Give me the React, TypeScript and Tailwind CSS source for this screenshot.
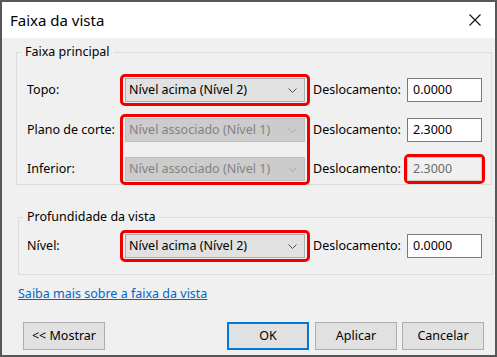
import React from "react"

const font = { fontFamily: '"Noto Sans", "Segoe UI", sans-serif' }

function Chevron({ disabled }: { disabled?: boolean }) {
  return (
    <svg width="9" height="5" viewBox="0 0 9 5" className="shrink-0">
      <path d="M0.5 0.5 L4.5 4.5 L8.5 0.5" fill="none" stroke={disabled ? "#a6a6a6" : "#505050"} strokeWidth="1" />
    </svg>
  )
}

function Combo({ value, disabled }: { value: string; disabled?: boolean }) {
  return (
    <div
      className={`flex h-[24px] w-[180px] items-center justify-between border pl-[3px] pr-[7px] text-[12.5px] ${
        disabled ? "border-[#bfbfbf] bg-[#cccccc] text-[#838383]" : "border-[#adadad] bg-[#e1e1e1] text-black"
      }`}
    >
      <span className="leading-none">{value}</span>
      <Chevron disabled={disabled} />
    </div>
  )
}

function Field({ value, disabled }: { value: string; disabled?: boolean }) {
  return (
    <div
      className={`flex h-[24px] w-[75px] items-center border pl-[5px] text-[12.5px] ${
        disabled ? "border-[#cccccc] bg-[#f0f0f0] text-[#6d6d6d]" : "border-[#7a7a7a] bg-white text-black"
      }`}
    >
      {value}
    </div>
  )
}

function Label({ text, className = "" }: { text: string; className?: string }) {
  return <div className={`flex h-[24px] items-center text-[12.5px] text-black ${className}`}>{text}</div>
}

function Button({ text, primary }: { text: string; primary?: boolean }) {
  return (
    <div
      className={`flex h-[28px] w-[82px] items-center justify-center bg-[#e1e1e1] text-[12.5px] text-black ${
        primary ? "border-2 border-[#0078d7]" : "border border-[#adadad]"
      }`}
    >
      {text}
    </div>
  )
}

export default function App() {
  return (
    <div style={font} className="flex h-[357px] w-[497px] flex-col border-2 border-[#575757] bg-[#f0f0f0]">
      {/* title bar */}
      <div className="flex h-[36px] shrink-0 items-center justify-between bg-white pl-[8px] pr-[14px]">
        <span className="text-[15px] text-black">Faixa da vista</span>
        <svg width="12" height="12" viewBox="0 0 12 12">
          <path d="M0.5 0.5 L11.5 11.5 M11.5 0.5 L0.5 11.5" stroke="#111" strokeWidth="1.1" />
        </svg>
      </div>

      <div className="flex flex-1 flex-col pl-[14px] pr-[3px] pt-[14px]">
        {/* Faixa principal */}
        <div className="relative flex border border-[#dcdcdc] pl-[10px] pt-[21px]">
          <span className="absolute -top-[10px] left-[4px] bg-[#f0f0f0] px-[4px] text-[12.5px] leading-[18px] text-black">
            Faixa principal
          </span>
          <div className="flex w-[93px] flex-col">
            <Label text="Topo:" className="mt-[4px]" />
            <Label text="Plano de corte:" className="mt-[16px]" />
            <Label text="Inferior:" className="mt-[15px]" />
          </div>
          <div className="-mb-[4px] flex flex-col">
            <div className="rounded-[5px] border-[3px] border-[#ee0000] px-[2px] py-[1px]">
              <Combo value="Nível acima (Nível 2)" />
            </div>
            <div className="mt-[8px] flex flex-col gap-[15px] rounded-[5px] border-[3px] border-[#ee0000] px-[2px] py-[1px]">
              <Combo value="Nível associado (Nível 1)" disabled />
              <Combo value="Nível associado (Nível 1)" disabled />
            </div>
          </div>
          <div className="ml-[3px] flex w-[94px] flex-col">
            <Label text="Deslocamento:" className="mt-[4px]" />
            <Label text="Deslocamento:" className="mt-[16px]" />
            <Label text="Deslocamento:" className="mt-[15px]" />
          </div>
          <div className="flex flex-col">
            <div className="mt-[4px]">
              <Field value="0.0000" />
            </div>
            <div className="mt-[16px]">
              <Field value="2.3000" />
            </div>
            <div className="-ml-[3px] mt-[12px] w-fit rounded-[5px] border-[3px] border-[#ee0000]">
              <Field value="2.3000" disabled />
            </div>
          </div>
        </div>

        {/* Profundidade da vista */}
        <div className="relative ml-[2px] mr-[-1px] mt-[32px] flex border border-[#dcdcdc] pb-[12px] pl-[8px] pt-[12px]">
          <span className="absolute -top-[10px] left-[4px] bg-[#f0f0f0] px-[4px] text-[12.5px] leading-[18px] text-black">
            Profundidade da vista
          </span>
          <div className="flex w-[93px] flex-col">
            <Label text="Nível:" className="mt-[4px]" />
          </div>
          <div className="rounded-[5px] border-[3px] border-[#ee0000] px-[2px] py-[1px]">
            <Combo value="Nível acima (Nível 2)" />
          </div>
          <div className="ml-[3px] flex w-[94px] flex-col">
            <Label text="Deslocamento:" className="mt-[4px]" />
          </div>
          <div className="mt-[4px]">
            <Field value="0.0000" />
          </div>
        </div>

        <a className="ml-[2px] mt-[11px] w-fit text-[12.5px] leading-[16px] text-[#0066cc] underline">
          Saiba mais sobre a faixa da vista
        </a>

        <div className="mt-[20px] flex pl-[7px] pr-[8px]">
          <Button text="<< Mostrar" />
          <div className="ml-auto flex">
            <Button text="OK" primary />
            <div className="ml-[6px]">
              <Button text="Aplicar" />
            </div>
            <div className="ml-[5px]">
              <Button text="Cancelar" />
            </div>
          </div>
        </div>
      </div>
    </div>
  )
}
